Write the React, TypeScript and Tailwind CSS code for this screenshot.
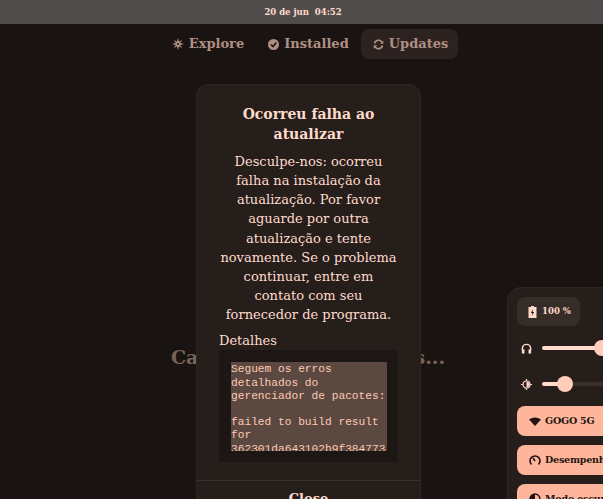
import React from "react";

const serif = { fontFamily: '"DejaVu Serif", "Liberation Serif", serif' };

function Spark() {
  return (
    <svg width="12" height="12" viewBox="0 0 16 16" fill="currentColor">
      <path d="M8 0 L9.4 5 L13.5 2.5 L11 6.6 L16 8 L11 9.4 L13.5 13.5 L9.4 11 L8 16 L6.6 11 L2.5 13.5 L5 9.4 L0 8 L5 6.6 L2.5 2.5 L6.6 5 Z" />
      <circle cx="8" cy="8" r="1.4" fill="#191412" />
    </svg>
  );
}
function Check() {
  return (
    <svg width="11" height="11" viewBox="0 0 16 16">
      <circle cx="8" cy="8" r="8" fill="currentColor" />
      <path d="M4.2 8 L7.2 11 L12.2 5" fill="none" stroke="#191412" strokeWidth="2.2" />
    </svg>
  );
}
function Refresh() {
  return (
    <svg width="11" height="11" viewBox="0 0 16 16" fill="none" stroke="currentColor" strokeWidth="2.4">
      <path d="M2.2 6.5 A6 6 0 0 1 13 4.5" />
      <path d="M13.8 9.5 A6 6 0 0 1 3 11.5" />
      <path d="M15 2 V7 H10 Z" fill="currentColor" stroke="none" />
      <path d="M1 14 V9 H6 Z" fill="currentColor" stroke="none" />
    </svg>
  );
}
function Slider({ fill, left, icon }: { fill: string; left: string; icon: React.ReactNode }) {
  return (
    <div className="flex items-center h-[18px]">
      <div className="w-[18px] flex justify-center text-[#ffdbcc] mr-[7px]">{icon}</div>
      <div className="relative flex-1 h-[4px] rounded-full bg-[#3a2f2a]">
        <div className={`absolute left-0 top-0 h-full rounded-full bg-[#ffdbcc] ${fill}`} />
        <div className={`absolute w-[16px] h-[16px] rounded-full bg-[#ffcdb9] top-[-6px] ${left}`} />
      </div>
    </div>
  );
}
function Pill({ icon, label }: { icon: React.ReactNode; label: string }) {
  return (
    <div className="flex items-center h-[30px] w-[130px] rounded-[8px] bg-[#ffb59b] text-[#1f1410] pl-[11px] shrink-0 overflow-hidden">
      <span className="w-[14px] flex justify-center mr-[3px]">{icon}</span>
      <span className="text-[9.5px] tracking-[-0.2px] font-bold whitespace-nowrap">{label}</span>
    </div>
  );
}

export default function App() {
  return (
    <div className="relative w-[603px] h-[499px] overflow-hidden bg-[#191412] flex flex-col" style={serif}>
      <div className="h-[24px] bg-[#504c4b] flex items-center justify-center text-[#ffdbcc] text-[8.5px] font-bold shrink-0 pl-[3px]">
        20 de jun&nbsp;&nbsp;04:52
      </div>
      <div className="flex justify-center items-center mt-[4px] text-[#b08f83] text-[13px] font-bold pl-[15px] pt-[1px]">
        <div className="flex items-center gap-[5px] h-[30px] px-[12px]"><Spark />Explore</div>
        <div className="flex items-center gap-[5px] h-[30px] px-[12px]"><Check />Installed</div>
        <div className="flex items-center gap-[5px] h-[30px] pl-[12px] pr-[10px] rounded-[8px] bg-[#2c2320]"><Refresh />Updates</div>
      </div>

      <div className="absolute left-[171px] top-[343px] text-[#7a6358] text-[19px] font-bold whitespace-nowrap w-[274px] flex justify-between">
        <span>Ca</span><span>s...</span>
      </div>

      <div className="absolute left-[196px] top-[84px] w-[225px] h-[430px] rounded-[12px] bg-[#261e1b] border border-[#2f2623] flex flex-col">
        <div className="px-[22px] pt-[19px] text-center">
          <div className="text-[#ffdbcc] text-[14px] font-bold leading-[20px]">Ocorreu falha ao atualizar</div>
          <div className="text-[#ffdbcc] text-[13px] leading-[19.15px] mt-[8px]">
            Desculpe-nos: ocorreu falha na instalação da atualização. Por favor aguarde por outra atualização e tente novamente. Se o problema continuar, entre em contato com seu fornecedor de programa.
          </div>
        </div>
        <div className="px-[22px] mt-[7px] text-[#ffdbcc] text-[13px] leading-[19px]">Detalhes</div>
        <div className="mx-[22px] h-[112px] bg-[#1c1614] p-[12px]">
          <div className="h-[89px] w-[156px] overflow-hidden bg-[#5b4840] text-[#ffc9b3] text-[11.2px] leading-[13.2px] whitespace-pre pt-[1px]" style={{ fontFamily: '"Liberation Mono", monospace' }}>
            {"Seguem os erros\ndetalhados do\ngerenciador de pacotes:\n\nfailed to build result\nfor\n362301da643102b9f384773"}
          </div>
        </div>
        <div className="mt-[18px] border-t border-[#3a2f2a] text-center text-[#ffdbcc] text-[13px] font-bold pt-[8px]">Close</div>
      </div>

      <div className="absolute left-[507px] top-[287px] w-[160px] h-[260px] rounded-[14px] bg-[#261e1b] border border-[#2f2623] px-[9px] pt-[9px] flex flex-col">
        <div className="w-[63px] h-[29px] rounded-[8px] bg-[#362c28] flex items-center justify-center gap-[5px] text-[#ffdbcc] text-[8.5px] font-bold shrink-0 pl-[2px]">
          <svg width="9" height="12" viewBox="0 0 9 12">
            <path d="M3 0H6V1H8.5V12H.5V1H3Z" fill="currentColor" />
            <path d="M5 3 L2.8 7 H4.4 L3.8 10 L6.2 6 H4.6 Z" fill="#261e1b" />
          </svg>
          100 %
        </div>
        <div className="mt-[13px]">
          <Slider fill="w-[60px]" left="left-[52px]" icon={
            <svg width="11" height="11" viewBox="0 0 12 12" fill="none" stroke="currentColor" strokeWidth="1.6">
              <path d="M1.5 8V6a4.5 4.5 0 0 1 9 0v2" />
              <rect x="1" y="7" width="2.8" height="4.5" fill="currentColor" stroke="none" />
              <rect x="8.2" y="7" width="2.8" height="4.5" fill="currentColor" stroke="none" />
            </svg>
          } />
        </div>
        <div className="mt-[18px]">
          <Slider fill="w-[22px]" left="left-[15px]" icon={
            <svg width="11" height="11" viewBox="0 0 12 12" fill="none" stroke="currentColor" strokeWidth="1.3">
              <circle cx="6" cy="6" r="3.8" />
              <path d="M6 3 A3 3 0 0 1 6 9Z" fill="currentColor" stroke="none" />
              <path d="M6 0v2M6 10V12M0 6h2M10 6H12" />
            </svg>
          } />
        </div>
        <div className="flex flex-col gap-[9px] mt-[13px]">
          <Pill label="GOGO 5G" icon={
            <svg width="12" height="9" viewBox="0 0 12 9"><path d="M0 2.5 Q6 -1.5 12 2.5 L6 9Z" fill="currentColor" /></svg>
          } />
          <Pill label="Desempenho" icon={
            <svg width="12" height="12" viewBox="0 0 12 12" fill="none" stroke="currentColor" strokeWidth="1.6">
              <path d="M2.5 10.5 A5 5 0 1 1 9.5 10.5" /><path d="M6 7 L4 3.8" />
            </svg>
          } />
          <Pill label="Modo escuro" icon={
            <svg width="12" height="12" viewBox="0 0 12 12">
              <circle cx="6" cy="6" r="5" fill="none" stroke="currentColor" strokeWidth="1.4" />
              <path d="M6 1A5 5 0 0 0 6 11Z" fill="currentColor" />
            </svg>
          } />
        </div>
      </div>
    </div>
  );
}
